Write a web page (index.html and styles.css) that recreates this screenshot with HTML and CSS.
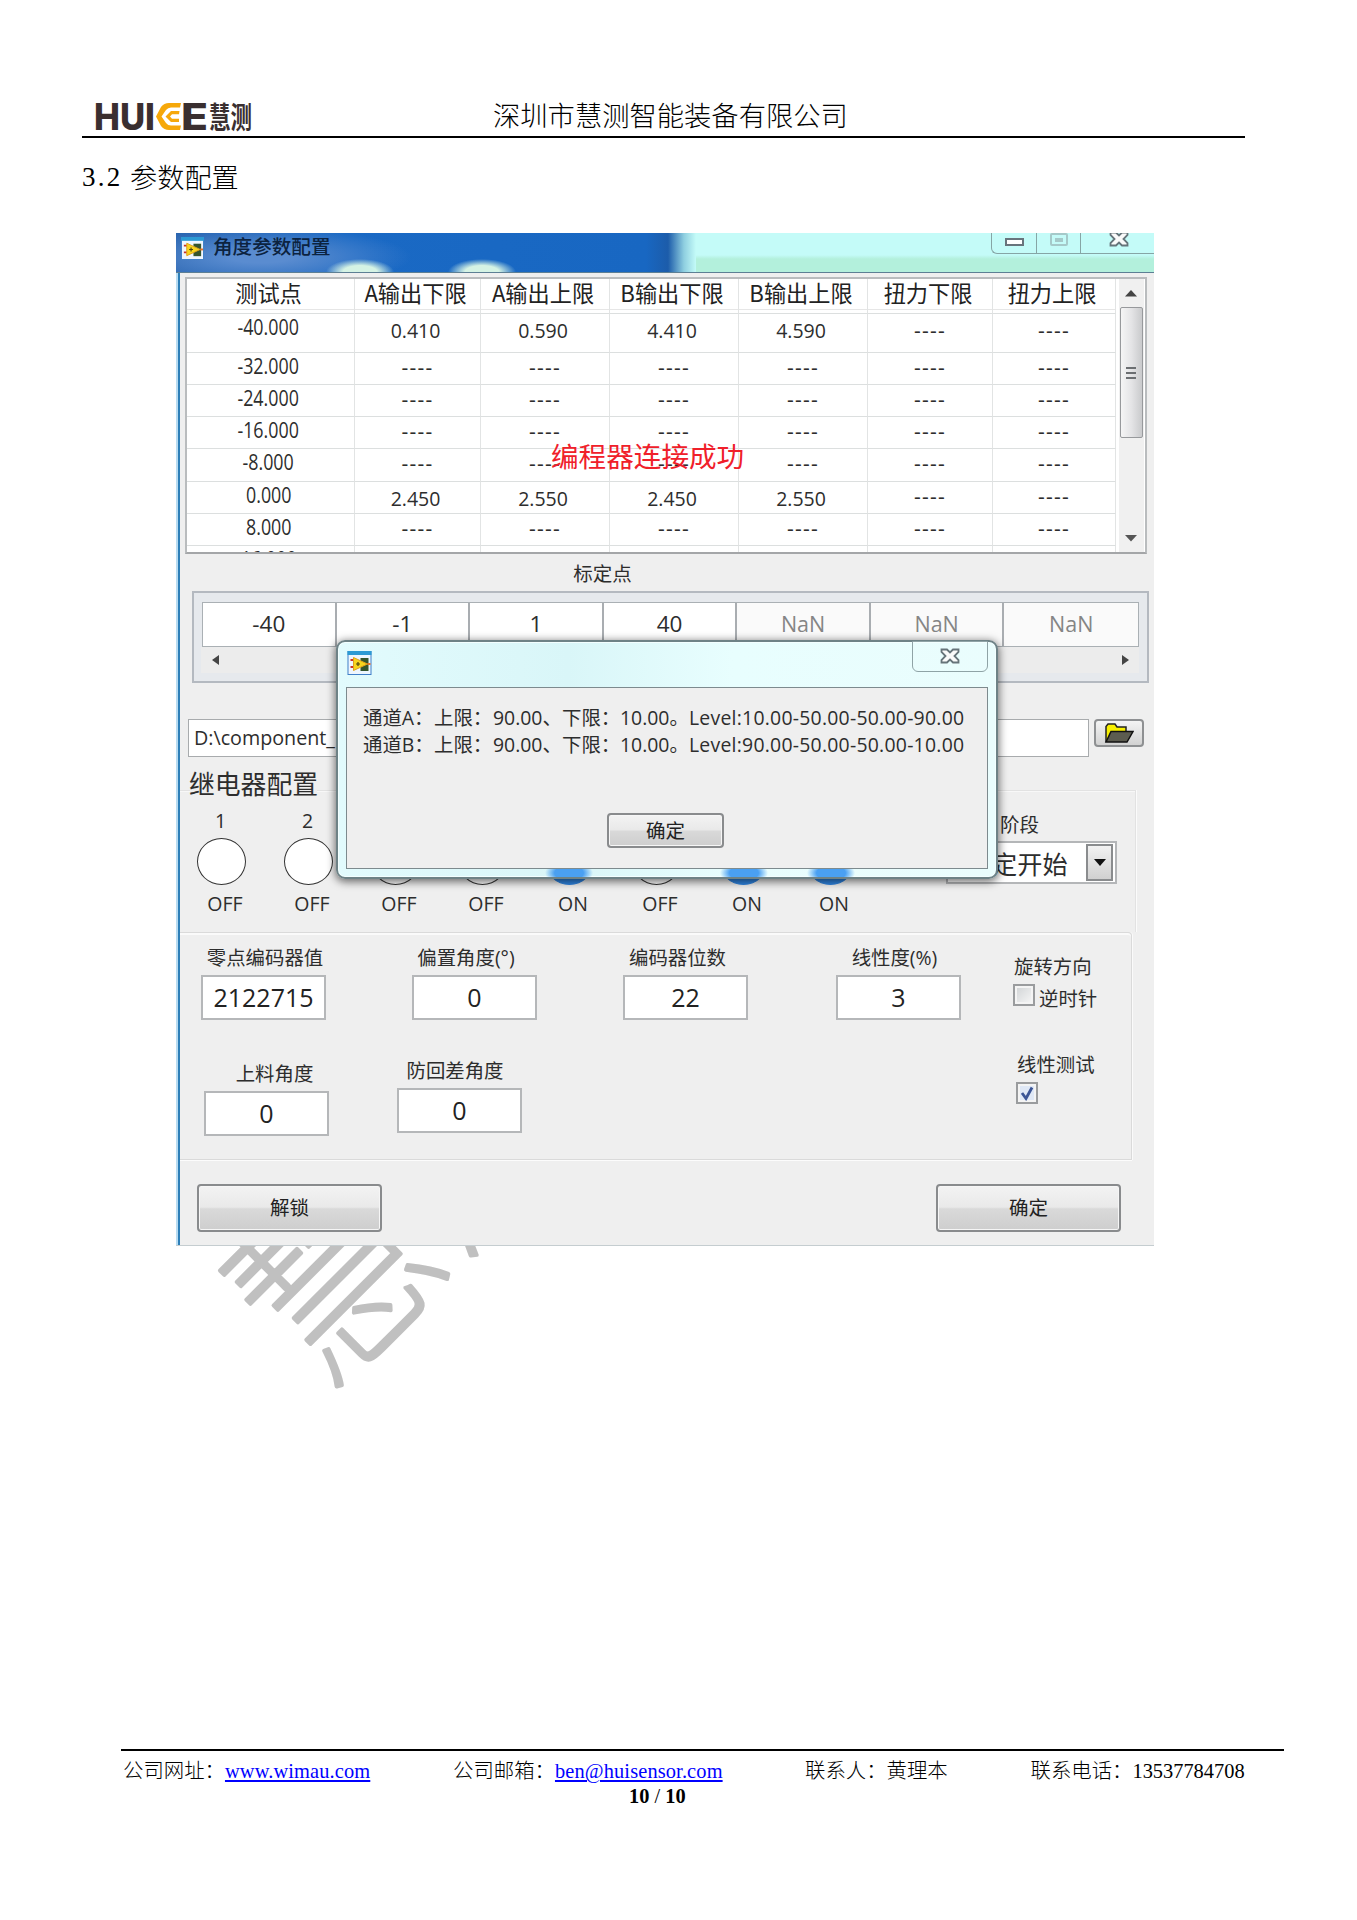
FILE: index.html
```html
<!DOCTYPE html>
<html lang="zh-CN">
<head>
<meta charset="utf-8">
<title>3.2 参数配置</title>
<link rel="stylesheet" href="styles.css">
</head>
<body>
<svg width="0" height="0" class="defs">
  <symbol id="vi" viewBox="0 0 24 24">
    <rect x=".5" y=".5" width="23" height="23" fill="#eef6ff" stroke="#3f7fc8"/>
    <rect x="0" y="0" width="24" height="4" fill="#2c9ad4"/>
    <path d="M3 9h4M3 16h4" stroke="#c8322a" stroke-width="2"/>
    <rect x="13" y="7" width="8" height="13" fill="#35552c"/>
    <path d="M6 6.500L20 13 6 19.500z" fill="#f7d51c" stroke="#e0a01c"/>
    <path d="M20 13h3" stroke="#e8742a" stroke-width="2"/>
    <path d="M8.500 13h4M10.500 11v4" stroke="#4b4410" stroke-width="1.200"/>
  </symbol>
  <symbol id="close" viewBox="0 0 20 16">
    <path d="M1.500 1.500h5.500l3 3 3-3h5.500v2.500l-4 4 4 4v2.500H13l-3-3-3 3H1.500V12l4-4-4-4z" fill="#fafafa" stroke="#66747a" stroke-width="1.800"/>
  </symbol>
</svg>

<header class="head">
  <svg class="logo" width="158" height="32" viewBox="0 0 158 32">
    <text class="brand" x="-1" y="29" textLength="61" lengthAdjust="spacingAndGlyphs">HUI</text>
    <path d="M86 2H74Q69 2 66 6L61 15.500 66 25Q69 29 74 29H85L86 24.500H76Q73 24.500 71 22L66.500 15.500 71 9Q73 6.500 76 6.500H85z" fill="#f6a80a"/>
    <path d="M84.500 10H76L70.500 15.500 76 21H84V17.800H77L75 15.500 77 13.200H84z" fill="#f6a80a"/>
    <text class="brand" x="86" y="29" textLength="27" lengthAdjust="spacingAndGlyphs">E</text>
    <text class="brand-cn" x="114" y="21.500" transform="scale(1 1.250)" textLength="43" lengthAdjust="spacingAndGlyphs">慧测</text>
  </svg>
  <div class="company">深圳市慧测智能装备有限公司</div>
</header>
<h1 class="title"><span class="num">3.2</span>参数配置</h1>

<main class="figure">
  <svg class="mark" width="560" height="400" viewBox="0 0 560 400">
    <text transform="translate(156 161) rotate(-45) scale(1 1.090)" x="-95" y="73">慧测</text>
  </svg>
  <section class="win">
    <div class="bar">
      <svg class="bar-ico" width="23" height="23"><use href="#vi"/></svg>
      <span class="bar-title">角度参数配置</span>
      <div class="ctl">
        <span class="c1"><i class="min"></i></span><span class="c2"><i class="max"></i></span><span class="c3"><svg width="20" height="16"><use href="#close"/></svg></span>
      </div>
    </div>
    <div class="client">
      <div class="table">
        <div class="grid">
          <b>测试点</b><b>A输出下限</b><b>A输出上限</b><b>B输出下限</b><b>B输出上限</b><b>扭力下限</b><b>扭力上限</b>
          <u><s>-40.000</s></u><i>0.410</i><i>0.590</i><i>4.410</i><i>4.590</i><i class="d lo">----</i><i class="d lo">----</i>
          <u><s>-32.000</s></u><i class="d">----</i><i class="d">----</i><i class="d">----</i><i class="d">----</i><i class="d">----</i><i class="d">----</i>
          <u><s>-24.000</s></u><i class="d">----</i><i class="d">----</i><i class="d">----</i><i class="d">----</i><i class="d">----</i><i class="d">----</i>
          <u><s>-16.000</s></u><i class="d">----</i><i class="d">----</i><i class="d">----</i><i class="d">----</i><i class="d">----</i><i class="d">----</i>
          <u><s>-8.000</s></u><i class="d">----</i><i class="d">----</i><i class="d">----</i><i class="d">----</i><i class="d">----</i><i class="d">----</i>
          <u><s>0.000</s></u><i>2.450</i><i>2.550</i><i>2.450</i><i>2.550</i><i class="d">----</i><i class="d">----</i>
          <u><s>8.000</s></u><i class="d">----</i><i class="d">----</i><i class="d">----</i><i class="d">----</i><i class="d">----</i><i class="d">----</i>
          <u><s>16.000</s></u><i></i><i></i><i></i><i></i><i></i><i></i>
        </div>
        <div class="vscroll">
          <svg width="12" height="7"><path d="M0 6.500L6 0l6 6.500z" fill="#444"/></svg>
          <div class="thumb"><em></em><em></em><em></em></div>
          <svg class="dn" width="12" height="7"><path d="M0 0h12L6 6.500z" fill="#555"/></svg>
        </div>
      </div>
      <div class="toast">编程器连接成功</div>
      <div class="cap">标定点</div>
      <div class="array">
        <div class="cells"><span>-40</span><span>-1</span><span>1</span><span>40</span><span class="nan">NaN</span><span class="nan">NaN</span><span class="nan">NaN</span></div>
        <div class="hscroll">
          <svg width="7" height="10"><path d="M7 0v10L0 5z" fill="#444"/></svg>
          <svg width="7" height="10"><path d="M0 0v10L7 5z" fill="#444"/></svg>
        </div>
      </div>
      <div class="path">
        <div class="file">D:\component_</div>
        <div class="browse"><svg width="30" height="20" viewBox="0 0 30 20"><path d="M2 19V3.500L4 1h7l2 3h9v4" fill="#f8f000" stroke="#222" stroke-width="1.500"/><path d="M2 19L7 8.500h22L23 19z" fill="#5c5c50" stroke="#111" stroke-width="1.500"/></svg></div>
      </div>
      <div class="relay">
        <div class="relay-title">继电器配置</div>
        <div class="relay-row">
          <div class="lamp"><span>1</span><i></i><b>OFF</b></div>
          <div class="lamp"><span>2</span><i></i><b>OFF</b></div>
          <div class="lamp"><span></span><i></i><b>OFF</b></div>
          <div class="lamp"><span></span><i></i><b>OFF</b></div>
          <div class="lamp on"><span></span><i></i><b>ON</b></div>
          <div class="lamp"><span></span><i></i><b>OFF</b></div>
          <div class="lamp on"><span></span><i></i><b>ON</b></div>
          <div class="lamp on"><span></span><i></i><b>ON</b></div>
          <div class="stage">
            <label>阶段</label>
            <div class="combo"><span>定开始</span><em><svg width="12" height="7"><path d="M0 0h12L6 7z" fill="#111"/></svg></em></div>
          </div>
        </div>
      </div>
      <div class="params">
        <div class="f f1"><label>零点编码器值</label><span>2122715</span></div>
        <div class="f f2"><label>偏置角度(°)</label><span>0</span></div>
        <div class="f f3"><label>编码器位数</label><span>22</span></div>
        <div class="f f4"><label>线性度(%)</label><span>3</span></div>
        <div class="dir"><label>旋转方向</label><div><i class="chk"></i>逆时针</div></div>
        <div class="f f5"><label>上料角度</label><span>0</span></div>
        <div class="f f6"><label>防回差角度</label><span>0</span></div>
        <div class="lin"><label>线性测试</label><i class="chk ck"><svg width="16" height="16" viewBox="0 0 16 16"><path d="M3 8l4 5.500L13 2.500" fill="none" stroke="#3b5596" stroke-width="2.800"/></svg></i></div>
      </div>
      <div class="actions"><div class="btn">解锁</div><div class="btn">确定</div></div>
    </div>
    <div class="dialog">
      <div class="dlg-bar">
        <svg width="25" height="24"><use href="#vi"/></svg>
        <div class="dlg-x"><svg width="20" height="16"><use href="#close"/></svg></div>
      </div>
      <div class="dlg-body">
        <div class="line"><span>通道A<em>：</em></span><span>上限<em>：</em></span><span>90.00、</span><span>下限<em>：</em></span><span>10.00。</span><span>Level:10.00-50.00-50.00-90.00</span></div>
        <div class="line"><span>通道B<em>：</em></span><span>上限<em>：</em></span><span>90.00、</span><span>下限<em>：</em></span><span>10.00。</span><span>Level:90.00-50.00-50.00-10.00</span></div>
        <div class="btn small">确定</div>
      </div>
    </div>
  </section>
</main>

<footer class="foot">
  <div class="contacts">
    <span>公司网址：<a>www.wimau.com</a></span>
    <span>公司邮箱：<a>ben@huisensor.com</a></span>
    <span>联系人：黄理本</span>
    <span>联系电话：13537784708</span>
  </div>
  <div class="pageno"><b>10</b> / <b>10</b></div>
</footer>
</body>
</html>
```
FILE: styles.css
```css
* { box-sizing: border-box; }
body {
  margin: 0; width: 1357px; height: 1920px; background: #fff; color: #000; overflow: hidden;
  font-family: "Liberation Serif", "Noto Sans CJK SC", serif;
  display: flex; flex-direction: column;
}
.defs { position: absolute; }
i, u, s, em { font-style: normal; text-decoration: none; }

.head { margin: 100px 112px 0 82px; height: 38px; border-bottom: 2px solid #000; display: flex; padding-left: 13px; flex: none; }
.logo { margin-top: 1px; overflow: visible; flex: none; }
.brand { font: 800 37px Inter, sans-serif; fill: #3a2f30; }
.brand-cn { font: 700 24px "Noto Sans CJK SC", sans-serif; fill: #3a2f30; }
.company { margin-left: 240px; font: 300 27.300px/28px "Noto Sans CJK SC", sans-serif; white-space: nowrap; }
.title { margin: 21px 0 0 82px; font: 300 27.200px/34px "Noto Sans CJK SC", sans-serif; height: 36px; display: flex; flex: none; }
.num { width: 48px; font-family: "Liberation Serif", serif; font-size: 27px; letter-spacing: 2.300px; line-height: 37px; white-space: nowrap; }

.figure { position: relative; margin: 38px 0 0 176px; width: 978px; height: 1013px; flex: none; }
.mark { position: absolute; left: 0; top: 877px; }
.mark text { font: 100 190px "Noto Sans CJK SC", sans-serif; fill: #c0c0c0; stroke: #c0c0c0; stroke-width: 3.500px; stroke-linejoin: round; }
.win { position: relative; width: 978px; height: 1013px; overflow: hidden; background: #efefef; font-family: "Open Sans", "Noto Sans CJK SC", sans-serif; color: #2d2d2d; border-bottom: 1px solid #c5cdd0; }
.bar {
  height: 40px; display: flex; border-bottom: 1px solid #5d7f94;
  background:
    radial-gradient(ellipse 34px 13px at 184px 39px, #d5f3e4 50%, transparent),
    radial-gradient(ellipse 34px 13px at 306px 39px, #d5f3e4 50%, transparent),
    linear-gradient(#c4fbf8 0 22px, #b3f0dc 26px 100%) 520px 0 no-repeat,
    radial-gradient(ellipse 150px 30px at 85px 24px, #5a8cd0 20%, transparent),
    linear-gradient(90deg, #2763ae, #1a69c4 170px, #1867c2 470px, #1c5caa 492px, #8fcfe0 508px, #c4fbf8 520px);
}
.bar-ico { margin: 4px 0 0 5px; }
.bar-title { margin-left: 9px; font-size: 19.600px; line-height: 28px; color: #0c2340; font-weight: 500; }
.ctl { margin-left: auto; width: 163px; height: 21px; border: 1px solid #86a5a5; border-top: 0; border-right: 0; border-radius: 0 0 0 6px; display: flex; }
.ctl span { border-right: 1px solid #86a5a5; display: flex; justify-content: center; }
.ctl .c1 { width: 45px; } .ctl .c2 { width: 44px; } .ctl .c3 { flex: 1; border: 0; padding-right: 1px; padding-left: 4px; margin-top: -2px; }
.min { width: 19px; height: 8px; margin-top: 5px; border: 2px solid #68747c; background: #fff; }
.max { width: 18px; height: 13px; border: 2px solid #a5c9c9; border-radius: 2px; background: linear-gradient(#a5c9c9, #a5c9c9) center / 8px 4px no-repeat; }

.client { height: 973px; border-left: 2px solid #2d7fb8; margin-left: 2px; padding-left: 5px; display: flex; flex-direction: column; position: relative; box-shadow: -2px 0 #b8dcf2; }
.table { margin-top: 4px; width: 962px; height: 277px; border: 2px solid #b9bcbe; border-bottom-color: #a4a6a8; background: #fff; display: flex; overflow: hidden; flex: none; }
.grid { display: grid; grid-template-columns: 168px 126px 129px 129px 129px 125px 123px; grid-template-rows: 35px 39px 32px 32px 32px 33px 32px 32px 24px; }
.grid > * { border-right: 1px solid #e2e4e4; border-bottom: 1px solid #dcdfdf; text-align: center; font-weight: 400; font-size: 19.500px; line-height: 33px; padding-right: 4px; white-space: nowrap; }
.grid b { font-size: 22.200px; line-height: 27px; font-family: "Noto Sans CJK SC", sans-serif; box-shadow: inset 0 -3px #fff, inset 0 -4px #e6e6e6; color: #222; }
.grid .d { font-size: 21px; line-height: 28px; letter-spacing: 1.200px; padding-right: 0; }
.grid .lo { line-height: 32px; }
.grid u { line-height: 26px; padding-right: 4px; }
.grid s { display: inline-block; font-size: 21px; line-height: 26px; transform: scaleX(.850); }
.vscroll { margin-left: 3px; width: 25px; background: #f0f0f0; display: flex; flex-direction: column; align-items: center; padding: 11px 1px 10px 0; }
.vscroll svg { flex: none; }
.thumb { width: 23px; height: 131px; margin-top: 10px; border: 1px solid #97999c; border-radius: 2px; background: linear-gradient(90deg, #f5f5f5, #e4e4e6 50%, #c9cacc); display: flex; flex-direction: column; justify-content: center; align-items: center; gap: 3px; }
.thumb em { width: 10px; height: 2px; background: #6c6f72; }
.dn { margin-top: auto; }
.toast { position: absolute; left: 371px; top: 162px; font: 400 27.600px/40px "Noto Sans CJK SC", sans-serif; color: #f0202a; white-space: nowrap; }
.cap { width: 835px; height: 37px; line-height: 40px; text-align: center; font-size: 19.500px; flex: none; }
.array { margin-left: 7px; width: 957px; height: 92px; border: 2px solid #b4b9c0; background: #e6e9ed; padding: 9px 7px; flex: none; }
.cells { display: grid; grid-template-columns: repeat(7, 1fr); width: 937px; height: 45px; border: 1px solid #aab0b4; background: #fff; margin-left: 1px; }
.cells span { text-align: center; font-size: 22.500px; line-height: 41px; border-right: 2px solid #a9adb1; }
.cells span:last-child { border-right: 0; }
.cells .nan { font-size: 21.500px; color: #858585; background: #fafafa; }
.hscroll { width: 938px; height: 26px; background: #ececec; display: flex; justify-content: space-between; align-items: center; padding: 0 10px 0 11px; }
.path { display: flex; margin: 36px 0 0 3px; height: 38px; flex: none; }
.file { width: 901px; border: 1px solid #a8abad; background: #fff; font-size: 19.700px; line-height: 36px; padding-left: 5px; }
.browse { margin: 0 0 0 5px; width: 50px; height: 28px; border: 2px solid #8e9092; border-radius: 4px; background: linear-gradient(#f4f4f4, #d2d2d2); display: flex; align-items: center; justify-content: center; }
.relay { height: 175px; position: relative; flex: none; width: 951px; }
.relay-title { margin: 7px 0 0 4px; font-size: 25.800px; line-height: 40px; height: 40px; }
.relay::before { content: ""; position: absolute; left: -5px; top: 33px; right: 0; bottom: 0; border: solid #e2e2e2; border-width: 1px 1px 0 0; box-shadow: inset 0 1px #f8f8f8, 1px 0 #fbfbfb; z-index: 0; clip-path: polygon(137px 0, 101% 0, 101% 100%, 0 100%, 0 0, 10px 0, 10px 4px, 137px 4px); }
.relay-row { display: flex; position: relative; padding-left: 12px; }
.lamp { width: 87px; height: 118px; font-size: 19.500px; flex: none; display: flex; flex-direction: column; }
.lamp span { width: 47px; text-align: center; height: 33px; line-height: 33px; }
.lamp i { width: 49px; height: 49px; border: 1.500px solid #333; border-radius: 50%; background: #fff; margin-top: 1px; }
.lamp.on i { background: #2f86e4; border-color: #2f86e4; }
.lamp b { font-weight: 400; width: 56px; text-align: center; line-height: 37px; }
.stage { position: absolute; left: 761px; top: 0; }
.stage label { display: block; margin: 1px 0 0 54px; line-height: 39px; height: 38px; font-size: 19.500px; }
.combo { margin-top: -2px; width: 171px; height: 43px; border: 2px solid #b4b6b8; background: #fff; display: flex; }
.combo span { margin-left: 44px; font-size: 25.200px; line-height: 42px; white-space: nowrap; }
.combo em { margin: 1px 2px 0 auto; width: 27px; height: 37px; border: 2px solid #8a8c8e; background: linear-gradient(#f2f2f2, #d0d0d0); display: flex; align-items: center; justify-content: center; }
.params { margin-left: -5px; width: 952px; height: 228px; border: solid #dadada; border-width: 1px 1px 1px 0; box-shadow: 0 1px #fcfcfc, inset 0 2px #fafafa, 1px 0 #fafafa; border-radius: 0 4px 0 0; flex: none; display: grid; grid-template-columns: 211px 211px 213px 175px 1fr; grid-template-rows: 113px 1fr; font-size: 19.400px; }
.f { display: flex; flex-direction: column; padding-left: 21px; padding-top: 10px; width: 146px; }
.f label { text-align: center; height: 32px; line-height: 30px; white-space: nowrap; }
.f span { width: 125px; height: 45px; border: 2px solid #b5b7b9; background: #fff; text-align: center; font-size: 25px; line-height: 41px; color: #222; flex: none; }
.f1 label { padding-left: 3px; } .f2 label { padding-right: 17px; } .f3 label { padding-right: 16px; }
.f4 label { padding-right: 8px; }
.f5 { padding-left: 24px; width: 149px; padding-top: 13px; } .f5 label { padding-left: 16px; }
.f6 { padding-left: 6px; width: 131px; padding-top: 10px; } .f6 label { padding-right: 9px; }
.dir { padding: 19px 0 0 23px; line-height: 30px; } .dir label, .lin label { display: block; height: 30px; }
.dir label { margin-left: 1px; }
.dir div { display: flex; line-height: 33px; gap: 4px; }
.chk { width: 22px; height: 22px; border: 2px solid #9a9c9e; background: linear-gradient(135deg, #cfd2d4, #f8f8f8); box-shadow: inset 0 0 0 2px #f4f4f4; margin-top: 2px; display: block; flex: none; }
.ck { background: #dfe8f6; margin-top: 0; } .ck svg { display: block; margin: 1px; }
.lin { grid-column: 5; padding: 3px 0 0 26px; line-height: 32px; } .lin label { margin-left: 1px; height: 33px; }
.actions { display: flex; justify-content: space-between; margin: 24px 0 0 12px; width: 924px; flex: none; }
.btn { width: 185px; height: 48px; border: 2px solid #898b8d; border-radius: 4px; background: linear-gradient(#f3f3f3, #e9e9e9 48%, #d9d9d9 52%, #cecece); box-shadow: inset 0 0 0 1px #f6f6f6; text-align: center; font-size: 19.500px; line-height: 44px; color: #222; }

.dialog { position: absolute; left: 160px; top: 407px; width: 662px; height: 239px; border: 2px solid #6e8286; border-radius: 9px; background: linear-gradient(90deg, #e2fbfd, #d9f6f8 35%, #e8fefe 60%, #eafdfd); box-shadow: 0 2px 9px 1px rgba(0,0,0,.550), inset 0 0 0 1px #f3ffff; padding: 0 8px; }
.dialog::before { content: ""; position: absolute; left: 0; right: 0; bottom: 0; height: 8px; background: radial-gradient(ellipse 24px 12px at 231px 4px, #4aa0f2 60%, transparent), radial-gradient(ellipse 24px 12px at 406px 4px, #4aa0f2 60%, transparent), radial-gradient(ellipse 24px 12px at 493px 4px, #4aa0f2 60%, transparent); }
.dlg-bar { height: 45px; display: flex; justify-content: space-between; padding: 9px 0 0 1px; }
.dlg-x { width: 76px; height: 31px; margin: -10px 0 0 0; border: 1.500px solid #8fa3a6; border-radius: 0 0 6px 6px; display: flex; justify-content: center; align-items: center; padding-bottom: 2px; }
.dlg-body { position: relative; height: 182px; border: 1.500px solid #7d8a8e; background: #efefef; padding: 16px 0 0 16px; font-size: 19.400px; }
.line { display: grid; grid-template-columns: 71px 59px 69px 58px 69px auto; line-height: 28px; height: 27px; white-space: nowrap; }
.line em { font-family: "Noto Sans CJK TC", sans-serif; line-height: 1; }
.line span:last-child { letter-spacing: .250px; }
.small { width: 117px; height: 35px; line-height: 31px; margin: 55px 0 0 244px; }

.foot { margin: 503px 0 0 121px; width: 1163px; border-top: 2px solid #000; flex: none; }
.contacts { display: grid; grid-template-columns: 330px 352px 225.500px auto; padding-left: 2px; font-size: 20.400px; line-height: 40px; height: 34px; font-weight: 300; white-space: nowrap; }
.contacts a { color: #00f; text-decoration: underline; letter-spacing: .130px; }
.pageno { margin-left: 508px; font-size: 20.400px; line-height: 22px; }
```
